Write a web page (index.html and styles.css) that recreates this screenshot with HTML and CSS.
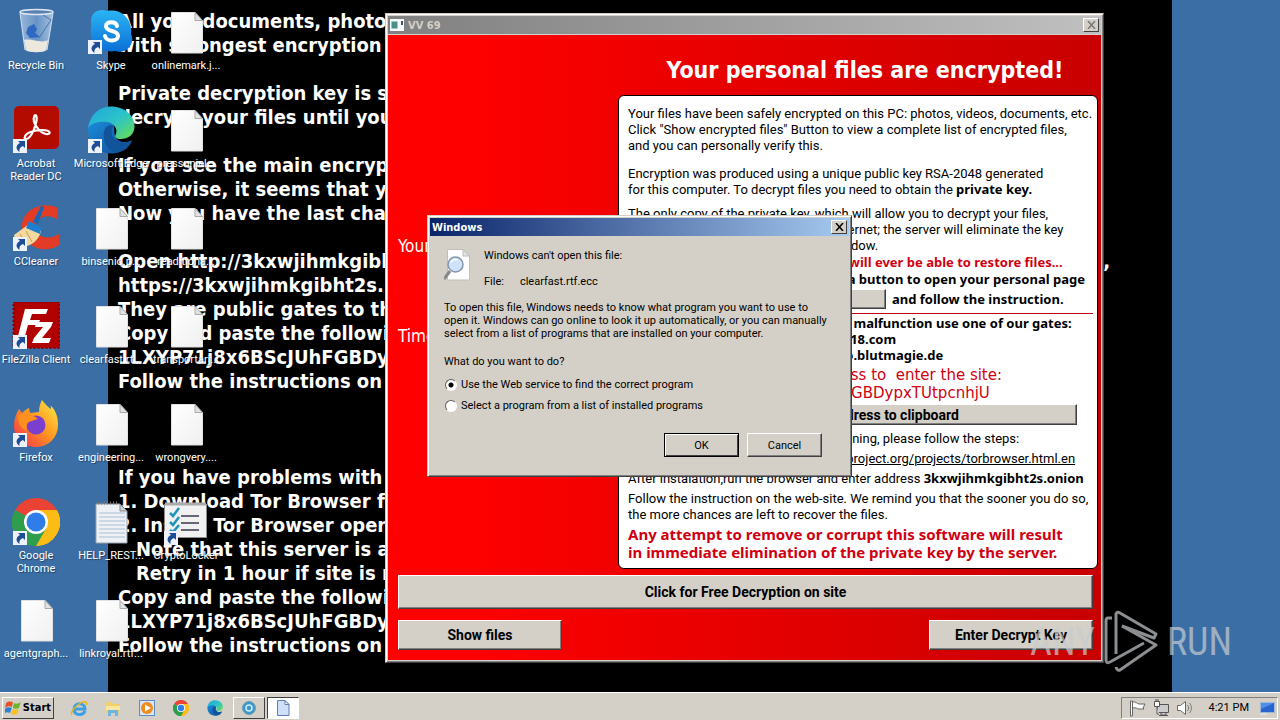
FILE: index.html
```html
<!DOCTYPE html>
<html lang="en">
<head>
    <meta charset="UTF-8">
    <meta name="viewport" content="width=device-width, initial-scale=1.0">
    <title>Desktop</title>
    <link rel="stylesheet" href="styles.css">
</head>
<body>
    <!-- shared icon shapes -->
    <svg class="defs" width="0" height="0" aria-hidden="true">
        <defs>
            <linearGradient id="paper" x1="0" y1="0" x2="1" y2="1"><stop offset="0" stop-color="#fff"/><stop offset="1" stop-color="#f0f0f0"/></linearGradient>
            <linearGradient id="skypeBlue" x1="0" y1="0" x2="0" y2="1"><stop offset="0" stop-color="#2bb5f5"/><stop offset="1" stop-color="#0a6fd6"/></linearGradient>
            <linearGradient id="edgeTop" x1="0" y1="0" x2="1" y2="1"><stop offset="0" stop-color="#1fa5e0"/><stop offset=".5" stop-color="#2cc3c9"/><stop offset="1" stop-color="#6be04f"/></linearGradient>
            <linearGradient id="edgeLow" x1="0" y1="0" x2="1" y2="1"><stop offset="0" stop-color="#1b8ede"/><stop offset="1" stop-color="#124a94"/></linearGradient>
            <linearGradient id="fox" x1="1" y1="0" x2="0" y2="1"><stop offset="0" stop-color="#fff04a"/><stop offset=".45" stop-color="#ff9a1f"/><stop offset="1" stop-color="#f4264f"/></linearGradient>
            <linearGradient id="glass" x1="0" y1="0" x2="1" y2="0"><stop offset="0" stop-color="#a9c4e2"/><stop offset=".5" stop-color="#6f9aca"/><stop offset="1" stop-color="#b9cfe8"/></linearGradient>
            <symbol id="doc" viewBox="0 0 48 48">
                <path d="M9.500 4.500H33L40.500 12.500V45H9.500Z" fill="url(#paper)" stroke="#e2e2e2"/>
                <path d="M33 4.500V12.500H40.500Z" fill="#e2e2e2" stroke="#aaa"/>
            </symbol>
            <symbol id="shortcut" viewBox="0 0 14 14">
                <path d="M0 0H14V14H0Z" fill="#eef2f8"/>
                <path d="M5 2H12V9L10 7C7 8 6 10 6.500 13C2 10 3 6 7 4Z" fill="#1c4d96"/>
            </symbol>
            <symbol id="edge" viewBox="0 0 48 48">
                <path d="M1 22C1 38 11 47 24 47.500C33 48 41 43 45 34C38 38 29 36 28 29C26 22 30 18 20 14C10 12 2 16 1 22Z" fill="url(#edgeLow)"/>
                <path d="M1 22C3 8 13 .5 24 .5C38 .5 48 10 47.500 21C47 29 41 33 34 33C29 33 27 31 29 28C31 23 27 17 20 16C11 15 3 18 1 22Z" fill="url(#edgeTop)"/>
                <path d="M17 26C15 36 21 46 31 46C38 45 42 41 45 35C38 38 28 37 25 29C24 25 25 22 27 20C22 18 18 21 17 26Z" fill="#11549c"/>
            </symbol>
            <symbol id="chrome" viewBox="0 0 48 48">
                <path d="M24 24L3.200 12A24 24 0 0 1 44.800 12Z" fill="#ea4335"/>
                <path d="M24 24L44.800 12A24 24 0 0 1 24 48Z" fill="#fbbc15"/>
                <path d="M24 24L24 48A24 24 0 0 1 3.200 12Z" fill="#2f9e4c"/>
                <path d="M24 12H44.800A24 24 0 0 1 24 48L34.400 30Z" fill="#fbbc15"/>
                <path d="M3.200 12L13.600 30L24 36L34.400 30L24 48A24 24 0 0 1 3.200 12Z" fill="#2f9e4c"/>
                <circle cx="24" cy="24" r="12" fill="#fff"/>
                <circle cx="24" cy="24" r="9.500" fill="#2f7de8"/>
            </symbol>
        </defs>
    </svg>

    <main class="desktop">
        <div class="wallpaper">
            <p>All your documents, photos, databases and other important files have been encrypted</p>
            <p>with strongest encryption RSA-2048 key, generated for this computer.</p>
            <p>&nbsp;</p>
            <p>Private decryption key is stored on a secret Internet server.</p>
            <p>decrypt your files until you pay and obtain the private key.</p>
            <p>&nbsp;</p>
            <p>If you see the main encryptor red window, follow its instructions.</p>
            <p>Otherwise, it seems that you or your antivirus deleted it.</p>
            <p>Now you have the last chance to decrypt your files.</p>
            <p>&nbsp;</p>
            <p class="spread"><span>Open http://3kxwjihmkgibht2s</span><span>,</span></p>
            <p>https://3kxwjihmkgibht2s.in your browser.</p>
            <p>They are public gates to the secret server.</p>
            <p>Copy and paste the following Bitcoin address:</p>
            <p>1LXYP71j8x6BScJUhFGBDypxTUtpcnhjU</p>
            <p>Follow the instructions on the server.</p>
            <p>&nbsp;</p>
            <p>&nbsp;</p>
            <p>&nbsp;</p>
            <p>If you have problems with gates, use direct connection:</p>
            <p>1. Download Tor Browser from the site</p>
            <p>2. Install Tor Browser open the page</p>
            <p class="indent">Note that this server is available via Tor only.</p>
            <p class="indent">Retry in 1 hour if site is not reachable.</p>
            <p>Copy and paste the following Bitcoin address:</p>
            <p>1LXYP71j8x6BScJUhFGBDypxTUtpcnhjU</p>
            <p>Follow the instructions on the server.</p>
        </div>

        <div class="icons">
            <div class="icon">
                <svg viewBox="0 0 48 48">
                    <path d="M8 3L13 42C14 45 34 45 35 42L41 3Z" fill="url(#glass)" opacity=".85"/>
                    <path d="M12 32L14 42C18 45 31 45 34 42L36 32C29 36 20 30 12 32Z" fill="#ece8de"/>
                    <path d="M16 19L22 16L25 21L23 25L28 29L18 30L14 25Z" fill="#2e68c0"/>
                    <path d="M31 7L39 12L27 30" fill="none" stroke="#4b74a8"/>
                    <ellipse cx="24.500" cy="4" rx="16.500" ry="2.500" fill="#5b82ae" stroke="#dbe6f2" stroke-width="1.500"/>
                    <path d="M8 5L13 42M41 5L35 42" stroke="#d5e3f3" fill="none"/>
                </svg>
                <span>Recycle Bin</span>
            </div>
            <div class="icon">
                <svg viewBox="0 0 48 48">
                    <rect x="2" y="0" width="45" height="43" rx="5" fill="#b30b00"/>
                    <path d="M13 31C13 27 22 24 30 24C40 24 39 29 34 28C28 27 20 17 22 11C23 7 26 10 24 17C22 25 18 33 14 33C13 33 12 32 13 31Z" fill="none" stroke="#fff" stroke-width="2.200"/>
                    <use href="#shortcut" x="1" y="33" width="14" height="14"/>
                </svg>
                <span>Acrobat<br>Reader DC</span>
            </div>
            <div class="icon">
                <svg viewBox="0 0 48 48">
                    <path d="M46 4C34-3 12 3 10 20C8 41 31 52 47 41V30C35 37 24 33 24 23C24 13 35 9 45 15Z" fill="#e23b26"/>
                    <path d="M2 31L17 20L29 27C27 36 20 41 12 43C6 41 3 37 2 31Z" fill="#f3d9a0"/>
                    <path d="M8 30L14 40M14 27L20 38" stroke="#c79c56" fill="none"/>
                    <path d="M17 17L29 23L28 30L14 24Z" fill="#1c7fd0"/>
                    <path d="M21 18L29 2L32 3L26 20Z" fill="#1767b8"/>
                    <use href="#shortcut" x="1" y="33" width="14" height="14"/>
                </svg>
                <span>CCleaner</span>
            </div>
            <div class="icon">
                <svg viewBox="0 0 48 48">
                    <rect x="1.500" y="0" width="46" height="46" fill="#b00000" stroke="#8a0000" stroke-width="2" stroke-dasharray="2 2"/>
                    <path d="M13 7H36L34 12H20L18 18H28L26 23H16L13 34H6Z" fill="#fff"/>
                    <path d="M24 20H41L39 25L30 36H39L37 41H20L22 36L31 25H23Z" fill="#fff"/>
                    <use href="#shortcut" x="1" y="33" width="14" height="14"/>
                </svg>
                <span>FileZilla Client</span>
            </div>
            <div class="icon">
                <svg viewBox="0 0 48 48">
                    <path d="M30 0C34 5 36 7 39 9C39 7 39 6 38 5C45 11 46 19 46 25C46 38 36 47 24 47C11 47 2 38 2 26C2 19 4 14 7 9L10 13C13 10 15 9 17 8L18 13L27 12C27 7 28 4 30 0Z" fill="url(#fox)"/>
                    <circle cx="24" cy="25" r="9.500" fill="#7b3fd0"/>
                    <path d="M6 16C12 12 20 14 26 19C22 20 20 21 17 22C14 24 14 28 15 31C8 28 6 22 6 16Z" fill="#ff8f1e"/>
                    <use href="#shortcut" x="1" y="33" width="14" height="14"/>
                </svg>
                <span>Firefox</span>
            </div>
            <div class="icon">
                <svg viewBox="0 0 48 48">
                    <use href="#chrome" width="48" height="48"/>
                    <use href="#shortcut" x="1" y="33" width="14" height="14"/>
                </svg>
                <span>Google<br>Chrome</span>
            </div>
            <div class="icon"><svg viewBox="0 0 48 48"><use href="#doc"/></svg><span>agentgraph...</span></div>

            <div class="icon">
                <svg viewBox="0 0 48 48">
                    <path d="M4 14C3 4 13 0 20 3C34 0 46 11 44 26C49 36 38 47 29 43C14 46 1 34 4 20Z" fill="url(#skypeBlue)"/>
                    <path d="M30 18C29 13 19 13 19 18C19 25 31 21 31 28C31 34 19 34 18 28" fill="none" stroke="#fff" stroke-width="4" stroke-linecap="round"/>
                    <use href="#shortcut" x="1" y="32" width="14" height="14"/>
                </svg>
                <span>Skype</span>
            </div>
            <div class="icon">
                <svg viewBox="0 0 48 48">
                    <use href="#edge" width="48" height="48"/>
                    <use href="#shortcut" x="1" y="33" width="14" height="14"/>
                </svg>
                <span>Microsoft Edge</span>
            </div>
            <div class="icon"><svg viewBox="0 0 48 48"><use href="#doc"/></svg><span>binsenio.p...</span></div>
            <div class="icon"><svg viewBox="0 0 48 48"><use href="#doc"/></svg><span>clearfast.rt...</span></div>
            <div class="icon"><svg viewBox="0 0 48 48"><use href="#doc"/></svg><span>engineering...</span></div>
            <div class="icon">
                <svg viewBox="0 0 48 48">
                    <path d="M9 6H33L40 13V45H9Z" fill="#edf1f5" stroke="#9aa3ad"/>
                    <path d="M12 15H38M12 19H38M12 23H38M12 27H38M12 31H38M12 35H38M12 39H38" stroke="#a9bdd2"/>
                    <path d="M33 6V13H40Z" fill="#c9d0d8" stroke="#888"/>
                    <path d="M11 5H32" stroke="#777" stroke-width="3" stroke-dasharray="1 2"/>
                </svg>
                <span>HELP_REST...</span>
            </div>
            <div class="icon"><svg viewBox="0 0 48 48"><use href="#doc"/></svg><span>linkroyal.rtf...</span></div>

            <div class="icon"><svg viewBox="0 0 48 48"><use href="#doc"/></svg><span>onlinemark.j...</span></div>
            <div class="icon"><svg viewBox="0 0 48 48"><use href="#doc"/></svg><span>pressuniel...</span></div>
            <div class="icon"><svg viewBox="0 0 48 48"><use href="#doc"/></svg><span>readitiona...</span></div>
            <div class="icon"><svg viewBox="0 0 48 48"><use href="#doc"/></svg><span>transportarj...</span></div>
            <div class="icon"><svg viewBox="0 0 48 48"><use href="#doc"/></svg><span>wrongvery....</span></div>
            <div class="icon">
                <svg viewBox="0 0 48 48">
                    <rect x="2.500" y="6.500" width="42" height="33" fill="#f1f1f1" stroke="#8b8b8b"/>
                    <path d="M3 6H44" stroke="#aaa" stroke-width="3"/>
                    <path d="M19 18H37M19 25H37M19 32H37" stroke="#667" stroke-width="2"/>
                    <path d="M8 15L11 18L17 10M8 24L11 27L17 19M8 32L11 34L17 27" fill="none" stroke="#1d93bd" stroke-width="2.500"/>
                    <use href="#shortcut" x="2" y="33" width="14" height="14"/>
                </svg>
                <span>CryptoLocker</span>
            </div>
        </div>

        <section class="window locker">
            <header class="titlebar inactive">
                <svg class="app-icon" viewBox="0 0 14 12"><path d="M0 0H14V12H0Z" fill="#f4f8f8"/><path d="M1.500 2.500H7.500V9.500H1.500Z" fill="#4a9088"/><path d="M11 2H13V6H11Z" fill="#456"/></svg>
                <span class="title">VV 69</span>
                <button class="close" aria-label="Close"><svg viewBox="0 0 9 8"><path d="M1 0L8 8M8 0L1 8" stroke="currentColor" stroke-width="1.500"/></svg></button>
            </header>
            <div class="locker-body">
                <div class="locker-main">
                    <aside class="timers">
                        <p>Your private key will be</p>
                        <p>Time left:</p>
                    </aside>
                    <div class="notice">
                        <h1>Your personal files are encrypted!</h1>
                        <div class="panel">
                            <p>Your files have been safely encrypted on this PC: photos, videos, documents, etc.<br>Click "Show encrypted files" Button to view a complete list of encrypted files,<br>and you can personally verify this.</p>
                            <p class="para">Encryption was produced using a unique public key RSA-2048 generated<br>for this computer. To decrypt files you need to obtain the <b>private key.</b></p>
                            <p class="copy">The only copy of the private key, which will allow you to decrypt your files,<br>is located on a secret server on the Internet; the server will eliminate the key<br>after a time period specified in this window.</p>
                            <p class="warn">Once that has been done, nobody will ever be able to restore files...</p>
                            <p class="strong">In order to decrypt the files press a button to open your personal page</p>
                            <div class="open-row">
                                <button class="btn" aria-label="Open page"></button>
                                <span class="strong">and follow the instruction.</span>
                            </div>
                            <div class="gates strong">
                                <p>In case of "File decryption button" malfunction use one of our gates:</p>
                                <p>http://34r6hq26q2h4jkzjs.7hwr34n18.com</p>
                                <p>https://3kxwjihmkgibht2s.s5.torgo.blutmagie.de</p>
                            </div>
                            <p class="big address">Use your Bitcoin address to&nbsp; enter the site:<br>1LXYP71j8x6BScJUhFGBDypxTUtpcnhjU</p>
                            <button class="btn copy-btn">Click to copy address to clipboard</button>
                            <p class="step">If both button and reserve gate not opening, please follow the steps:</p>
                            <p class="step">You must install this browser <a href="#">www.torproject.org/projects/torbrowser.html.en</a></p>
                            <p class="step">After instalation,run the browser and enter address <b>3kxwjihmkgibht2s.onion</b></p>
                            <p class="step">Follow the instruction on the web-site. We remind you that the sooner you do so,<br>the more chances are left to recover the files.</p>
                            <p class="big threat">Any attempt to remove or corrupt this software will result<br>in immediate elimination of the private key by the server.</p>
                        </div>
                    </div>
                </div>
                <div class="actions">
                    <button class="btn wide">Click for Free Decryption on site</button>
                    <div class="action-row">
                        <button class="btn">Show files</button>
                        <button class="btn">Enter Decrypt Key</button>
                    </div>
                </div>
            </div>
        </section>

        <section class="window dialog">
            <header class="titlebar">
                <span class="title">Windows</span>
                <button class="close" aria-label="Close"><svg viewBox="0 0 9 8"><path d="M1 0L8 8M8 0L1 8" stroke="currentColor" stroke-width="1.500"/></svg></button>
            </header>
            <form class="dialog-body">
                <div class="file-info">
                    <svg viewBox="0 0 30 34">
                        <path d="M3.500 .5H19L25.500 7V31H3.500Z" fill="#fdfdfd" stroke="#c3bfb8"/>
                        <path d="M19 .5V7H25.500Z" fill="#e4e4e4" stroke="#bbb"/>
                        <path d="M6 22L0 30" stroke="#888" stroke-width="3"/>
                        <circle cx="11.500" cy="15.500" r="7.500" fill="#cfe2fa" stroke="#8695ac" stroke-width="1.500"/>
                        <path d="M7 14C8 11 11 10 14 11" fill="none" stroke="#fff" stroke-width="1.500"/>
                    </svg>
                    <div>
                        <p>Windows can't open this file:</p>
                        <p class="file-row"><span>File:</span><span>clearfast.rtf.ecc</span></p>
                    </div>
                </div>
                <p>To open this file, Windows needs to know what program you want to use to<br>open it. Windows can go online to look it up automatically, or you can manually<br>select from a list of programs that are installed on your computer.</p>
                <p class="question">What do you want to do?</p>
                <label class="choice"><input type="radio" name="method" checked>Use the Web service to find the correct program</label>
                <label class="choice"><input type="radio" name="method">Select a program from a list of installed programs</label>
                <div class="dialog-buttons">
                    <button type="button" class="btn default">OK</button>
                    <button type="button" class="btn">Cancel</button>
                </div>
            </form>
        </section>

        <div class="watermark">
            <span>ANY</span>
            <svg viewBox="0 0 56 64">
                <path d="M13 44V4Q14 1 17 3L53 24L51 28L19 16" fill="none" stroke="currentColor" stroke-width="3" stroke-linejoin="round"/>
                <path d="M9 8H5Q3 8 3 11V50Q3 54 7 52L41 33" fill="none" stroke="currentColor" stroke-width="3" stroke-linejoin="round"/>
                <path d="M19 16L53 35L17 60Q14 61 13 57" fill="none" stroke="currentColor" stroke-width="3" stroke-linejoin="round"/>
            </svg>
            <span>RUN</span>
        </div>
    </main>

    <footer class="taskbar">
        <button class="start">
            <svg viewBox="0 0 16 16">
                <path d="M1 3C3 1 5 1 8 2L7 7C4 6 3 6 0 8Z" fill="#e8522a"/>
                <path d="M9 3C11 4 13 4 16 2L14 8C12 9 10 9 8 8Z" fill="#6cb52d"/>
                <path d="M0 9C2 7 4 7 7 8L5 13C3 12 1 12-1 14Z" fill="#2f7fd8"/>
                <path d="M8 9C10 10 12 10 14 9L12 14C10 15 8 15 6 14Z" fill="#f8c022"/>
            </svg>
            Start
        </button>
        <nav class="quick">
            <svg viewBox="0 0 18 18"><path d="M15 12C13 17 4 17 4 10C4 3 15 3 15 10H5" fill="none" stroke="#3aa0e4" stroke-width="3"/><path d="M2 16C-1 12 12 1 16 3C17 4 17 5 16 6" fill="none" stroke="#e8b420" stroke-width="1.500"/></svg>
            <svg viewBox="0 0 18 18"><path d="M2 3H8L9 5H16V14H2Z" fill="#f1d06c"/><path d="M2 7H16V11H2Z" fill="#f9e6a0"/><path d="M4 17V11H14V17H11V14H7V17Z" fill="#6bb5e0"/></svg>
            <svg viewBox="0 0 18 18"><rect x="1.500" y="1.500" width="15" height="15" fill="#d7e6f5" stroke="#5b8fc4"/><circle cx="9" cy="9" r="6" fill="#f08a1c"/><path d="M7 5.500V12.500L13 9Z" fill="#fff"/></svg>
            <svg viewBox="0 0 18 18"><use href="#chrome" x="1" y="1" width="16" height="16"/></svg>
            <svg viewBox="0 0 18 18"><use href="#edge" x="1" y="1" width="16" height="16"/></svg>
        </nav>
        <button class="task" aria-label="Service window"><svg viewBox="0 0 16 16"><circle cx="8" cy="8" r="6.500" fill="#3f95c6" stroke="#6d9dbb"/><circle cx="8" cy="8" r="3" fill="none" stroke="#c9ecfb" stroke-width="1.500"/></svg></button>
        <button class="task active" aria-label="Document window"><svg viewBox="0 0 16 16"><path d="M2.500 .5H10L14 4.500V15.500H2.500Z" fill="#cfe0fa" stroke="#5f7fb5"/><path d="M10 .5V4.500H14Z" fill="#fff" stroke="#5f7fb5"/></svg></button>
        <div class="tray">
            <svg viewBox="0 0 18 18"><path d="M2.500 2V17H4.500V2ZM4.500 3C8 2 9 5 11 5H17L15 9L16 10H11C9 10 8 8 4.500 9Z" fill="#fff" stroke="#666"/></svg>
            <svg viewBox="0 0 18 18"><path d="M5.500 5.500H16.500V13.500H5.500ZM9 14V16H14V14" fill="#ccc" stroke="#555"/><path d="M7 16.500H16" stroke="#555"/><path d="M2.500 2.500H7.500V7.500H2.500ZM4 2V0M6 2V0M5 8V15H7" fill="#fff" stroke="#555"/></svg>
            <svg viewBox="0 0 18 18"><path d="M1.500 6.500H4.500L9.500 2.500V15.500L4.500 11.500H1.500Z" fill="#fff" stroke="#666"/><path d="M11.500 6C13 8 13 10 11.500 12M13.500 4C16 7 16 11 13.500 14" fill="none" stroke="#777"/></svg>
            <span class="clock">4:21 PM</span>
            <svg viewBox="0 0 18 18"><rect x="2.500" y="3.500" width="14" height="10" fill="#2766cf" stroke="#9fb6d6"/><path d="M3 4H16L3 10Z" fill="#4f8fe8"/><path d="M2 15H9" stroke="#eee"/></svg>
        </div>
    </footer>
</body>
</html>
```
FILE: styles.css
```css
* {
    box-sizing: border-box;
}
body {
    margin: 0;
    height: 100vh;
    display: flex;
    flex-direction: column;
    overflow: hidden;
    background: #3a6ea5;
    color: #000;
    font-family: Roboto, "DejaVu Sans Condensed", sans-serif;
    font-size: 11px;
    line-height: 13px;
}
p, h1 {
    margin: 0;
}
button {
    font: inherit;
    color: inherit;
    padding: 0;
}
svg {
    display: block;
}
.defs {
    position: absolute;
}

/* desktop */
.desktop {
    flex: 1;
    position: relative;
    display: flex;
    justify-content: center;
    overflow: hidden;
}
.wallpaper {
    width: 1064px;
    padding: 9px 10px;
    background: #000;
    color: #fff;
    font-family: "DejaVu Sans Condensed", "DejaVu Sans", sans-serif;
    font-size: 20px;
    font-weight: bold;
    line-height: 24px;
    white-space: nowrap;
}
.wallpaper .indent {
    padding-left: 18px;
}
.wallpaper .spread {
    display: flex;
    justify-content: space-between;
    width: 992px;
}
.icons {
    position: absolute;
    top: 8px;
    left: 0;
    display: grid;
    grid-template-rows: repeat(7, 98px);
    grid-auto-columns: 75px;
    grid-auto-flow: column;
    color: #fff;
}
.icon {
    display: flex;
    flex-direction: column;
    align-items: center;
    gap: 3px;
    padding-right: 3px;
    text-align: center;
    white-space: nowrap;
}
.icon svg {
    width: 48px;
    height: 48px;
}
.icon span {
    text-shadow: 1px 1px 1px rgba(0, 0, 0, 0.4);
}

/* windows */
.window {
    position: absolute;
    display: flex;
    flex-direction: column;
    background: #d4d0c8;
    border: 1px solid;
    border-color: #d4d0c8 #404040 #404040 #d4d0c8;
    box-shadow: inset 1px 1px #fff, inset -1px -1px #808080;
    padding: 2px;
}
.titlebar {
    display: flex;
    align-items: center;
    gap: 4px;
    height: 18px;
    padding: 0 2px;
    background: linear-gradient(to right, #0a246a, #a6caf0);
    color: #fff;
    font-family: "DejaVu Sans Condensed", "DejaVu Sans", sans-serif;
    font-weight: bold;
}
.titlebar.inactive {
    background: linear-gradient(to right, #808080, #c0c0c0);
    color: #d4d0c8;
}
.titlebar .title {
    flex: 1;
}
.app-icon {
    width: 14px;
    height: 12px;
}
.close {
    width: 16px;
    height: 14px;
    display: grid;
    place-items: center;
    background: #d4d0c8;
    color: #000;
    border: 1px solid;
    border-color: #fff #404040 #404040 #fff;
}
.inactive .close {
    color: #777;
}
.close svg {
    width: 9px;
    height: 8px;
}
.btn {
    background: #d4d0c8;
    border: 1px solid;
    border-color: #fff #404040 #404040 #fff;
    box-shadow: inset -1px -1px #808080;
}

/* locker window */
.locker {
    top: 13px;
    left: 385px;
    width: 719px;
}
.locker .titlebar {
    margin-bottom: 1px;
}
.locker-body {
    padding: 19px 3px 10px 10px;
    background: linear-gradient(to right, #f00, #f00 10%, #c80000);
}
.locker-main {
    display: grid;
    grid-template-columns: 1fr 480px;
}
.timers {
    display: flex;
    flex-direction: column;
    gap: 70px;
    padding-top: 182px;
    color: #fff;
    font-family: "DejaVu Sans Condensed", "DejaVu Sans", sans-serif;
    font-size: 17px;
    line-height: 20px;
}
.notice h1 {
    margin-bottom: 9px;
    padding-left: 14px;
    color: #fff;
    font-family: "DejaVu Sans Condensed", "DejaVu Sans", sans-serif;
    font-size: 23px;
    line-height: 32px;
    text-align: center;
}
.panel {
    padding: 10px 4px 7px 9px;
    background: #fff;
    border: 1px solid #000;
    border-radius: 6px;
    font-size: 13px;
    line-height: 16px;
    white-space: nowrap;
}
.para {
    margin: 12px 0 8px;
}
.warn, .strong, .threat, .panel b {
    font-family: "Noto Sans", "DejaVu Sans Condensed", sans-serif;
    font-weight: bold;
}
.panel b {
    line-height: 1;
}
.warn {
    color: #d00010;
    margin-bottom: 1px;
}
.open-row {
    display: flex;
    align-items: center;
    gap: 6px;
    margin-top: 2px;
}
.open-row .btn {
    width: 258px;
    height: 20px;
}
.gates {
    margin: 4px 0 3px;
    border-top: 1px solid #c00010;
    padding-top: 1px;
}
.big {
    color: #d00010;
    font-size: 15px;
    line-height: 18px;
}
.address {
    width: 426px;
    font-family: "DejaVu Sans", sans-serif;
    text-align: center;
}
.btn.copy-btn, .actions .btn {
    font-size: 14px;
    font-weight: bold;
}
.copy-btn {
    display: block;
    width: 449px;
    height: 21px;
    margin: 2px 0 6px;
}
.step + .step {
    margin-top: 4px;
}
.threat {
    margin-top: 2px;
}
.step a {
    color: inherit;
}
.actions {
    margin-top: 6px;
    padding-right: 5px;
}
.actions .wide {
    display: block;
    width: 100%;
    height: 34px;
}
.action-row {
    display: flex;
    justify-content: space-between;
    margin-top: 11px;
}
.action-row .btn {
    width: 164px;
    height: 30px;
}

/* file association dialog */
.dialog {
    top: 215px;
    left: 427px;
    width: 425px;
}
.dialog-body {
    padding: 13px 14px 17px;
    white-space: nowrap;
}
.file-info {
    display: flex;
    gap: 10px;
    margin-bottom: 13px;
}
.file-info svg {
    width: 30px;
    height: 34px;
}
.file-row {
    display: flex;
    gap: 16px;
    margin-top: 13px;
}
.question {
    margin: 15px 0 10px;
}
.choice {
    display: flex;
    align-items: center;
    gap: 4px;
    margin-bottom: 8px;
}
.choice input {
    appearance: none;
    width: 12px;
    height: 12px;
    margin: 0 0 0 1px;
    border: 1px solid;
    border-color: #606060 #fff #fff #606060;
    border-radius: 50%;
    background: #fff;
}
.choice input:checked {
    background: radial-gradient(circle, #000 2px, #fff 3px);
}
.dialog-buttons {
    display: flex;
    justify-content: flex-end;
    gap: 8px;
    margin-top: 21px;
    padding-right: 13px;
}
.dialog-buttons .btn {
    width: 75px;
    height: 24px;
}
.dialog-buttons .default {
    border-color: #000;
    box-shadow: inset 1px 1px #fff, inset -1px -1px #404040;
}

.watermark {
    position: absolute;
    right: 48px;
    bottom: 18px;
    display: flex;
    align-items: center;
    gap: 8px;
    color: #c8ccd0;
    opacity: .7;
    font-family: "Roboto Condensed", "Open Sans Condensed", Roboto, sans-serif;
    font-size: 38px;
    line-height: 40px;
}
.watermark svg {
    width: 56px;
    height: 64px;
}

/* taskbar */
.taskbar {
    display: flex;
    align-items: center;
    height: 28px;
    padding: 2px 2px 0;
    background: #d4d0c8;
    border-top: 1px solid #fff;
}
.start {
    display: flex;
    align-items: center;
    gap: 2px;
    width: 52px;
    height: 22px;
    padding: 0 2px;
    background: #d4d0c8;
    border: 1px solid;
    border-color: #fff #404040 #404040 #fff;
    font-family: "DejaVu Sans Condensed", "DejaVu Sans", sans-serif;
    font-weight: bold;
}
.start svg {
    width: 16px;
    height: 16px;
}
.quick {
    display: flex;
    gap: 16px;
    padding: 0 9px 0 16px;
}
.quick svg, .tray svg {
    width: 18px;
    height: 18px;
}
.task {
    display: grid;
    place-items: center;
    width: 32px;
    height: 22px;
    margin-right: 2px;
    background: #d4d0c8;
    border: 1px solid;
    border-color: #fff #404040 #404040 #fff;
}
.task.active {
    background: #fff;
    border-color: #404040 #fff #fff #404040;
}
.task svg {
    width: 16px;
    height: 16px;
}
.tray {
    display: flex;
    align-items: center;
    gap: 6px;
    height: 22px;
    margin-left: auto;
    padding: 0 1px 0 6px;
    border: 1px solid;
    border-color: #808080 #fff #fff #808080;
}
.clock {
    padding: 0 3px 0 9px;
}
```
